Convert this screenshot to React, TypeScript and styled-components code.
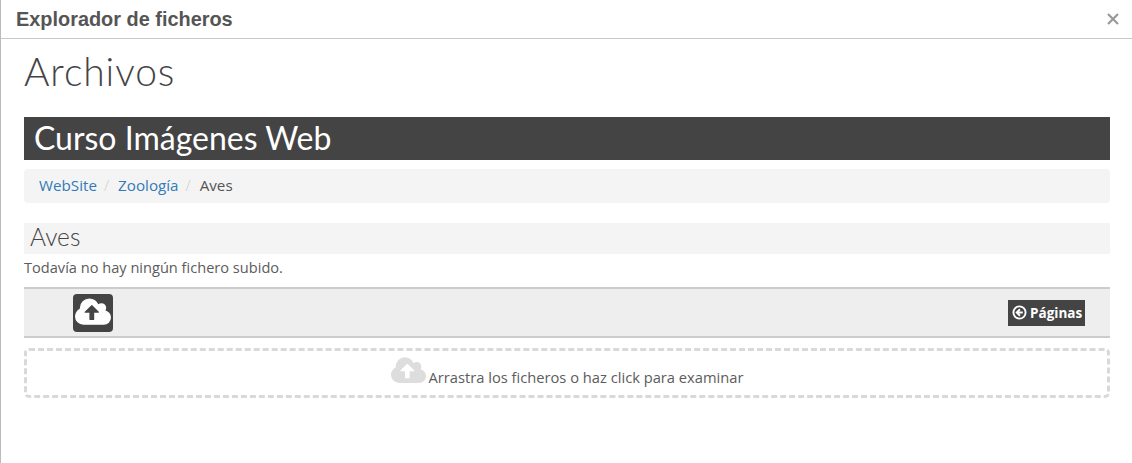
import React from 'react';
import styled, { createGlobalStyle } from 'styled-components';

const GlobalStyle = createGlobalStyle`
  html, body {
    margin: 0;
    padding: 0;
    background: #fff;
    overflow: hidden;
  }
  * {
    box-sizing: border-box;
  }
`;

const Dialog = styled.div`
  width: 1132px;
  height: 463px;
  border-left: 1px solid #bbb;
  background: #fff;
  font-family: 'Open Sans', sans-serif;
  font-size: 15px;
  font-weight: 300;
  color: #444;
`;

const TitleBar = styled.header`
  height: 39px;
  border-bottom: 1px solid #c8c8c8;
  padding: 0 13px 0 15px;
  display: flex;
  align-items: center;
  justify-content: space-between;
`;

const DialogTitle = styled.span`
  font-family: 'Liberation Sans', Arial, sans-serif;
  font-weight: 700;
  font-size: 19.9px;
  color: #555;
`;

const CloseIcon = styled.svg`
  width: 12px;
  height: 12px;
  stroke: #999;
  stroke-width: 2.2;
  fill: none;
`;

const Content = styled.main`
  padding: 0 22px 0 23px;
`;

const PageTitle = styled.h1`
  margin: 0;
  height: 78px;
  padding-top: 7px;
  font-family: Lato, sans-serif;
  font-weight: 300;
  font-size: 39px;
  letter-spacing: 0.9px;
  line-height: 50px;
  color: #444;
`;

const CourseBanner = styled.h2`
  margin: 0;
  height: 43px;
  padding-left: 10px;
  background: #444;
  color: #fff;
  font-family: Lato, sans-serif;
  font-weight: 400;
  font-size: 32px;
  line-height: 41px;
`;

const Breadcrumb = styled.nav`
  margin-top: 9px;
  height: 34px;
  padding: 0 15px 2px;
  display: flex;
  align-items: center;
  background: #f4f4f4;
  border-radius: 4px;
`;

const Crumb = styled.span<{ $link?: boolean }>`
  color: ${(props) => (props.$link ? '#337ab7' : '#555')};
  font-weight: 400;
  font-size: 15.2px;
`;

const Separator = styled.span`
  color: #ccc;
  padding: 0 9px 0 7px;
`;

const SectionTitle = styled.h3`
  margin: 20px 0 0;
  height: 31px;
  padding-left: 6px;
  background: #f4f4f4;
  font-family: Lato, sans-serif;
  font-weight: 300;
  font-size: 24.5px;
  line-height: 28px;
  color: #444;
`;

const EmptyNote = styled.p`
  margin: 0;
  height: 33px;
  line-height: 27px;
  color: #5c5c5c;
  font-weight: 400;
  font-size: 14.6px;
`;

const Toolbar = styled.div`
  height: 51px;
  padding: 0 25px 0 49px;
  display: flex;
  align-items: center;
  justify-content: space-between;
  background: #eee;
  border-top: 2px solid #ccc;
  border-bottom: 2px solid #ccc;
`;

const UploadButton = styled.button`
  width: 40px;
  height: 38px;
  padding: 0;
  border: 0;
  border-radius: 4px;
  background: #444;
  color: #fff;
  display: flex;
  align-items: center;
  justify-content: center;
`;

const PagesButton = styled.button`
  width: 77px;
  height: 26px;
  padding: 0 0 0 4px;
  border: 0;
  background: #444;
  color: #fff;
  display: flex;
  align-items: center;
  gap: 3px;
  font-family: 'Open Sans', sans-serif;
  font-weight: 700;
  font-size: 13.5px;
`;

const CloudIcon = styled.svg<{ $size: number }>`
  width: ${(props) => props.$size}px;
  height: ${(props) => (props.$size * 1792) / 1920}px;
  fill: currentColor;
  flex: none;
`;

const BackIcon = styled.svg`
  width: 15px;
  height: 15px;
  fill: none;
  stroke: currentColor;
  stroke-width: 2;
  flex: none;
`;

const DropZone = styled.div`
  margin-top: 10px;
  height: 50px;
  border: 3px dashed #d9d9d9;
  border-radius: 5px;
  display: flex;
  align-items: center;
  justify-content: center;
  color: #5c5c5c;
  font-size: 14.7px;
  font-weight: 400;
`;

const DropIcon = styled.span`
  color: #ddd;
  display: flex;
  margin: -3px 3px 0 0;
`;

const DropText = styled.span`
  margin-top: 7px;
`;

const cloudPath =
  'M1280 864q0-14-9-23l-352-352q-9-9-23-9t-23 9l-351 351q-10 12-10 24 0 14 9 23t23 9h224v352q0 13 9.5 22.5t22.5 9.5h192q13 0 22.5-9.5t9.5-22.5v-352h224q13 0 22.5-9.5t9.5-22.5zm640 288q0 159-112.5 271.5t-271.5 112.5h-1088q-185 0-316.5-131.5t-131.5-316.5q0-130 70-240t188-165q-2-30-2-43 0-212 150-362t362-150q156 0 285.5 87t188.5 231q71-62 166-62 106 0 181 75t75 181q0 76-41 138 130 31 213.5 135.5t83.5 238.5z';

const Cloud = ({ size }: { size: number }) => (
  <CloudIcon $size={size} viewBox="0 0 1920 1792">
    <path d={cloudPath} />
  </CloudIcon>
);

export default function App() {
  return (
    <>
      <GlobalStyle />
      <Dialog>
        <TitleBar>
          <DialogTitle>Explorador de ficheros</DialogTitle>
          <CloseIcon viewBox="0 0 12 12">
            <path d="M1 1l10 10M11 1L1 11" />
          </CloseIcon>
        </TitleBar>
        <Content>
          <PageTitle>Archivos</PageTitle>
          <CourseBanner>Curso Imágenes Web</CourseBanner>
          <Breadcrumb>
            <Crumb $link>WebSite</Crumb>
            <Separator>/</Separator>
            <Crumb $link>Zoología</Crumb>
            <Separator>/</Separator>
            <Crumb>Aves</Crumb>
          </Breadcrumb>
          <SectionTitle>Aves</SectionTitle>
          <EmptyNote>Todavía no hay ningún fichero subido.</EmptyNote>
          <Toolbar>
            <UploadButton>
              <Cloud size={36} />
            </UploadButton>
            <PagesButton>
              <BackIcon viewBox="0 0 16 16">
                <circle cx="8" cy="8" r="6.5" />
                <path d="M8.5 4.5L5 8l3.5 3.5M5 8h6.5" />
              </BackIcon>
              Páginas
            </PagesButton>
          </Toolbar>
          <DropZone>
            <DropIcon>
              <Cloud size={35} />
            </DropIcon>
            <DropText>Arrastra los ficheros o haz click para examinar</DropText>
          </DropZone>
        </Content>
      </Dialog>
    </>
  );
}
